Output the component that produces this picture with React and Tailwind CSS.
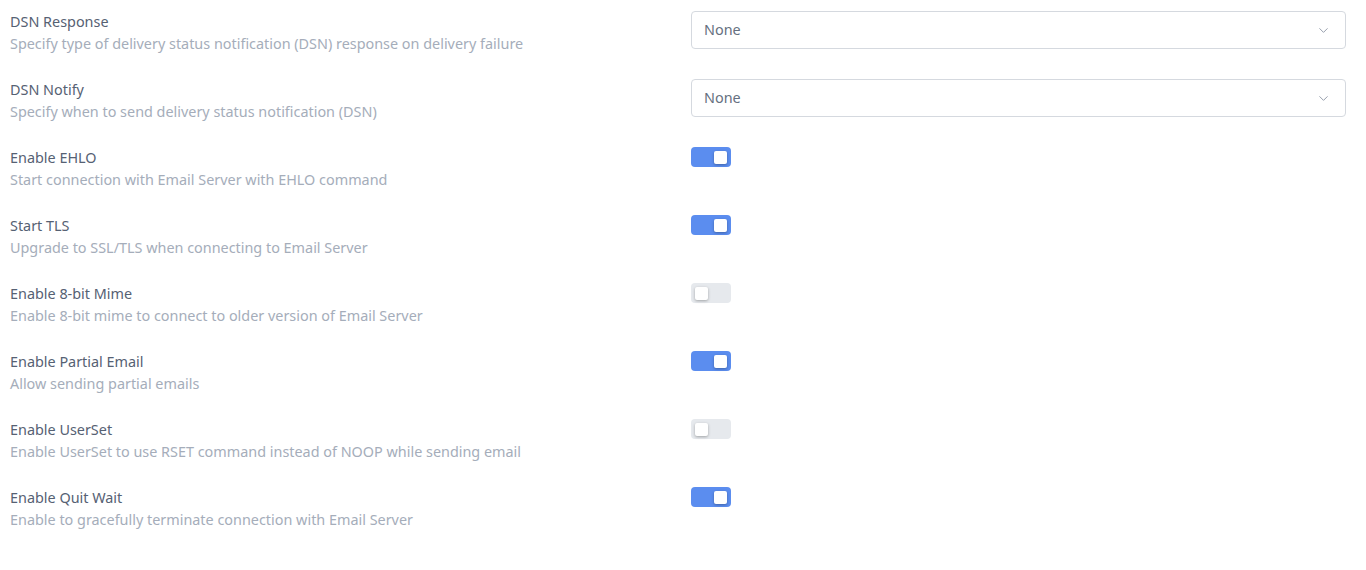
import React, { useState } from 'react';
import { ChevronDown } from 'lucide-react';

const selectRows = [
  {
    title: 'DSN Response',
    desc: 'Specify type of delivery status notification (DSN) response on delivery failure',
  },
  {
    title: 'DSN Notify',
    desc: 'Specify when to send delivery status notification (DSN)',
  },
];

const toggleRows = [
  { title: 'Enable EHLO', desc: 'Start connection with Email Server with EHLO command', on: true },
  { title: 'Start TLS', desc: 'Upgrade to SSL/TLS when connecting to Email Server', on: true },
  { title: 'Enable 8-bit Mime', desc: 'Enable 8-bit mime to connect to older version of Email Server', on: false },
  { title: 'Enable Partial Email', desc: 'Allow sending partial emails', on: true },
  { title: 'Enable UserSet', desc: 'Enable UserSet to use RSET command instead of NOOP while sending email', on: false },
  { title: 'Enable Quit Wait', desc: 'Enable to gracefully terminate connection with Email Server', on: true },
];

const Label = ({ title, desc }) => (
  <div className="w-[681px] shrink-0">
    <div className="text-[14.4px] leading-[22px] text-[#566173]">{title}</div>
    <div className="text-[14.4px] leading-[22px] text-[#a5adba]">{desc}</div>
  </div>
);

const Toggle = ({ initial }) => {
  const [on, setOn] = useState(initial);
  return (
    <button
      type="button"
      onClick={() => setOn(!on)}
      className={`flex h-[20px] w-[40px] items-center rounded-[4px] px-[4px] ${
        on ? 'justify-end bg-[#5b8def]' : 'justify-start bg-[#e6e9ed]'
      }`}
    >
      <span className="block h-[13px] w-[13px] rounded-[2px] bg-white shadow-[0_1px_3px_rgba(0,0,0,0.3)]" />
    </button>
  );
};

const App = () => {
  return (
    <div
      className="min-h-[570px] bg-white pl-[10px] pr-[20px] pt-[11px]"
      style={{ fontFamily: '"Noto Sans", "Open Sans", sans-serif' }}
    >
      <div className="flex flex-col gap-[24px]">
        {selectRows.map((row) => (
          <div key={row.title} className="flex items-start">
            <Label title={row.title} desc={row.desc} />
            <div className="flex h-[38px] flex-1 items-center justify-between rounded-[4px] border border-[#d5d9df] pl-[12px] pr-[14px]">
              <span className="text-[14.4px] text-[#667080]">None</span>
              <ChevronDown size={15} strokeWidth={1.5} className="text-[#8f98a6]" />
            </div>
          </div>
        ))}
        {toggleRows.map((row) => (
          <div key={row.title} className="flex items-start">
            <Label title={row.title} desc={row.desc} />
            <Toggle initial={row.on} />
          </div>
        ))}
      </div>
    </div>
  );
};

export default App;
